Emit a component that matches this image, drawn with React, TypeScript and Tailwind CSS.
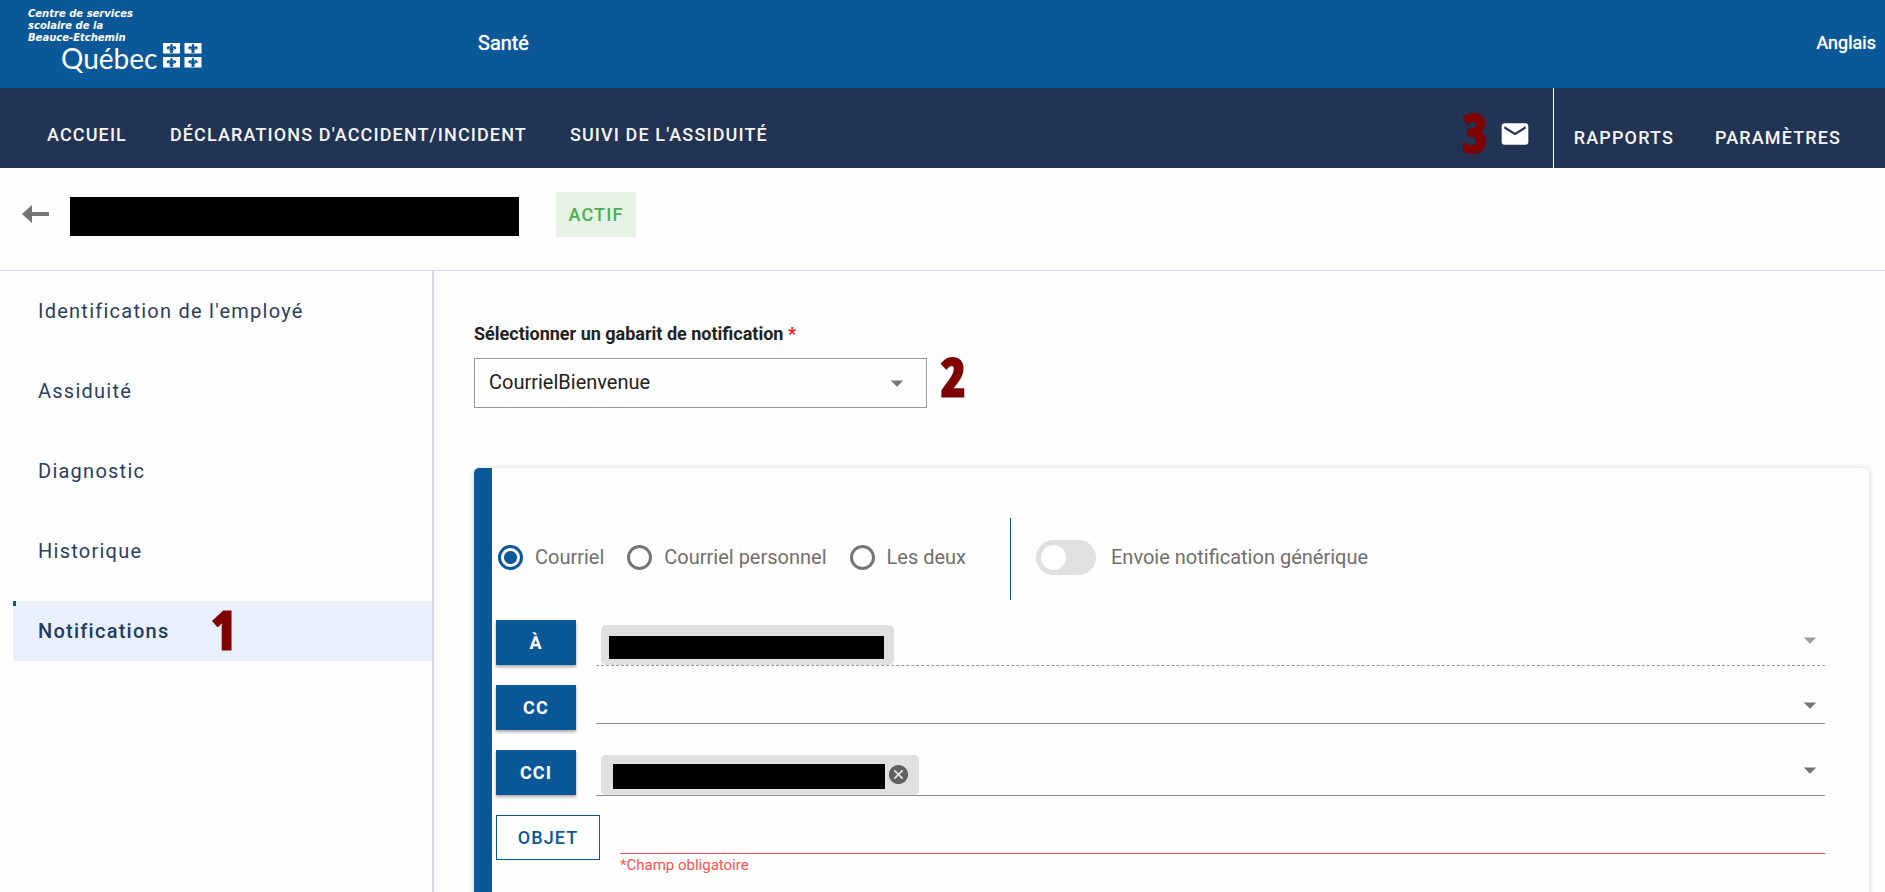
import { useState } from "react";
import type { ReactNode } from "react";
import { MdArrowDropDown, MdCancel, MdMail } from "react-icons/md";

const sections = ["Identification de l'employé", "Assiduité", "Diagnostic", "Historique", "Notifications"];
const channels = ["Courriel", "Courriel personnel", "Les deux"];

function Step({ children }: { children: ReactNode }) {
  return (
    <span className="pb-1 font-['Open_Sans_Condensed','Roboto_Condensed',sans-serif] text-[52px] leading-9 font-bold text-[#7f0000] [-webkit-text-stroke:3px_#7f0000]">
      {children}
    </span>
  );
}

function FlagTile({ x, y }: { x: number; y: number }) {
  return (
    <g transform={`translate(${x} ${y})`}>
      <rect width="17" height="10.5" fill="#fff" />
      <path
        d="M8.5 .5c1.500 1.300 1.700 2.600.9 4 .9-1.800 3.800-1.800 3.900.3 0 1.300-1.200 1.900-2.100 1.200.4-.9-.6-1-1.100-.2l-.1.500h1.200v1H9.500c.1.900.5 1.300 1.200 1.700L8.500 10.200 6.300 9c.7-.4 1.100-.8 1.200-1.700H5.800v-1H7l-.1-.5c-.5-.8-1.500-.7-1.100.2-.9.7-2.100.1-2.100-1.200.1-2.100 3-2.100 3.900-.3-.8-1.400-.6-2.700.9-4z"
        fill="#0a5897"
      />
    </g>
  );
}

function Logo() {
  return (
    <a href="#accueil" className="block w-[450px] pl-7 pt-2 text-white" aria-label="Centre de services scolaire de la Beauce-Etchemin">
      <span className="block font-['DejaVu_Sans',sans-serif] text-[10px] leading-3 font-bold italic">
        Centre de services
        <br />
        scolaire de la
        <br />
        Beauce-Etchemin
      </span>
      <span className="flex items-start gap-[6px] pl-[33px]">
        <span className="font-['Lato',sans-serif] text-[28px] leading-7">Québec</span>
        <svg width="39" height="25" viewBox="0 0 39 25" className="-mt-px" aria-hidden="true">
          <FlagTile x={0} y={0} />
          <FlagTile x={21.5} y={0} />
          <FlagTile x={0} y={14} />
          <FlagTile x={21.5} y={14} />
        </svg>
      </span>
    </a>
  );
}

function NavLink({ children }: { children: ReactNode }) {
  return (
    <a href="#nav" className="text-lg leading-6 font-medium tracking-[0.0625em] whitespace-nowrap">
      {children}
    </a>
  );
}

function Recipient({ label, muted, tall, children }: { label: string; muted?: boolean; tall?: boolean; children?: ReactNode }) {
  return (
    <div className="flex h-[65px] items-start gap-5">
      <button type="button" className="h-[45px] w-20 shrink-0 bg-[#0a5897] text-lg font-bold tracking-[0.0625em] text-white shadow-[0_2px_3px_rgba(0,0,0,0.35)]">
        {label}
      </button>
      <div
        className={`flex grow items-end justify-between border-b pl-[5px] ${tall ? "h-[46px]" : "h-[39px]"} ${muted ? "border-dashed border-[#999]" : "border-[#919191]"}`}
      >
        {children}
        <button type="button" aria-label={`Choisir ${label}`} className={`ml-auto self-start pt-[5px] ${muted ? "text-[#9c9c9c]" : "text-[#757575]"}`}>
          <MdArrowDropDown size={30} />
        </button>
      </div>
    </div>
  );
}

export default function App() {
  const [channel, setChannel] = useState("Courriel");
  const [generic, setGeneric] = useState(false);

  return (
    <div className="flex h-screen flex-col overflow-hidden bg-[#fefefe] font-['Roboto',sans-serif] text-[#212121] antialiased">
      <header className="flex h-[88px] shrink-0 bg-[#0a5897] text-white">
        <Logo />
        <span className="self-center pb-[2px] pl-7 text-xl [text-shadow:0_0_1px_#fff]">Santé</span>
        <a href="#langue" className="ml-auto self-center pr-[9px] pb-[2px] text-lg [text-shadow:0_0_1px_#fff]">
          Anglais
        </a>
      </header>

      <nav className="flex h-20 shrink-0 items-stretch bg-[#223453] pr-11 pl-[47px] text-[#f5f5f5]">
        <div className="flex grow items-center gap-[43px] pt-[14px]">
          <NavLink>ACCUEIL</NavLink>
          <NavLink>DÉCLARATIONS D'ACCIDENT/INCIDENT</NavLink>
          <NavLink>SUIVI DE L'ASSIDUITÉ</NavLink>
        </div>
        <div className="flex items-center gap-3 border-r border-white pt-[11px] pr-[22px]">
          <Step>3</Step>
          <button type="button" aria-label="Messages" className="text-white">
            <MdMail size={32} />
          </button>
        </div>
        <div className="flex items-center gap-[41px] pt-5 pl-5">
          <NavLink>RAPPORTS</NavLink>
          <NavLink>PARAMÈTRES</NavLink>
        </div>
      </nav>

      <div className="flex h-[103px] shrink-0 items-start border-b border-[#cfdaee] pt-6 pl-[22px]">
        <button type="button" aria-label="Retour" className="mt-3">
          <svg width="27" height="20" viewBox="0 0 27 20" aria-hidden="true">
            <path d="M0 10 10 1v7h17v4H10v7z" fill="#757575" />
          </svg>
        </button>
        <div className="mt-[5px] ml-[21px] h-[39px] w-[449px] bg-black" />
        <span className="ml-[37px] flex h-[45px] w-20 items-center justify-center bg-[#e4f3e5] text-lg font-medium tracking-[0.0625em] text-[#4caf50]">
          ACTIF
        </span>
      </div>

      <div className="flex min-h-0 grow">
        <aside className="w-[434px] shrink-0 border-r-2 border-[#cfdaee] pt-[10px] pl-[13px]">
          <ul className="flex flex-col gap-5 text-xl tracking-[0.0625em] text-[#2a3f60]">
            {sections.map((name) =>
              name === "Notifications" ? (
                <li key={name} className="relative flex h-[60px] items-center gap-[42px] bg-[#eaf0fb] pl-[25px] text-[#223c62]">
                  <span className="absolute top-0 left-0 h-[5px] w-[3px] bg-[#0a5897]" />
                  <a href="#notifications" className="font-medium">{name}</a>
                  <Step>1</Step>
                </li>
              ) : (
                <li key={name} className="flex h-[60px] items-center pl-[25px]">
                  <a href="#section">{name}</a>
                </li>
              ),
            )}
          </ul>
        </aside>

        <main className="grow pt-[51px] pr-4 pl-10">
          <label htmlFor="gabarit" className="block text-lg leading-6 font-bold">
            Sélectionner un gabarit de notification <span className="text-[#ff1a1a]">*</span>
          </label>
          <div className="mt-3 flex items-start gap-[14px]">
            <div className="relative w-[453px]">
              <select id="gabarit" className="h-[50px] w-full appearance-none border border-[#999] pb-[2px] pl-[14px] text-xl">
                <option>CourrielBienvenue</option>
              </select>
              <MdArrowDropDown size={30} className="pointer-events-none absolute top-[10px] right-[15px] text-[#757575]" />
            </div>
            <Step>2</Step>
          </div>

          <section className="mt-[60px] h-[600px] rounded-[5px] border-l-[18px] border-[#0a5897] pt-[50px] pr-11 pl-1 shadow-[0_1px_6px_rgba(0,0,0,0.18)]">
            <div className="flex h-[82px] items-center text-xl text-[#6f6f6f]">
              <div className="flex h-full w-[515px] shrink-0 items-center gap-[23px] border-r border-[#0a5897] pb-1 pl-[2px]">
                {channels.map((name) => (
                  <label key={name} className="flex items-center gap-3 whitespace-nowrap">
                    <input
                      type="radio"
                      name="canal"
                      checked={channel === name}
                      onChange={() => setChannel(name)}
                      className="size-[25px] appearance-none rounded-full border-[3px] border-[#757575] checked:border-[#0a5897] checked:bg-[radial-gradient(circle,#0a5897_6px,transparent_7px)]"
                    />
                    {name}
                  </label>
                ))}
              </div>
              <label className="flex items-center gap-[15px] pb-1 pl-[25px]">
                <input
                  type="checkbox"
                  role="switch"
                  checked={generic}
                  onChange={() => setGeneric(!generic)}
                  className="h-[35px] w-[60px] appearance-none rounded-full bg-[#e0e0e0] p-[5px] before:block before:size-[25px] before:rounded-full before:bg-white checked:bg-[#0a5897] checked:before:ml-auto"
                />
                Envoie notification générique
              </label>
            </div>

            <div className="mt-5">
              <Recipient label="À" muted tall>
                <div className="h-10 rounded-[5px] bg-[#e0e0e0] pt-[11px] pr-[10px] pl-2">
                  <div className="h-[23px] w-[275px] bg-black" />
                </div>
              </Recipient>
              <Recipient label="CC" />
              <Recipient label="CCI" tall>
                <div className="flex h-10 items-start gap-[2px] rounded-[5px] bg-[#e0e0e0] pt-2 pr-[9px] pl-3">
                  <div className="mt-px h-[25px] w-[272px] bg-black" />
                  <button type="button" aria-label="Retirer" className="text-[#616161]">
                    <MdCancel size={23} />
                  </button>
                </div>
              </Recipient>
              <div className="flex items-start gap-5">
                <label htmlFor="objet" className="flex h-[45px] w-[104px] shrink-0 items-center justify-center border border-[#0a5897] text-lg font-medium tracking-[0.0625em] text-[#0a5897]">
                  OBJET
                </label>
                <div className="grow">
                  <input id="objet" className="block h-[39px] w-full border-b border-[#f05a5a] outline-none" />
                  <p className="text-[15px] leading-[22px] text-[#ff5252]">*Champ obligatoire</p>
                </div>
              </div>
            </div>
          </section>
        </main>
      </div>
    </div>
  );
}
